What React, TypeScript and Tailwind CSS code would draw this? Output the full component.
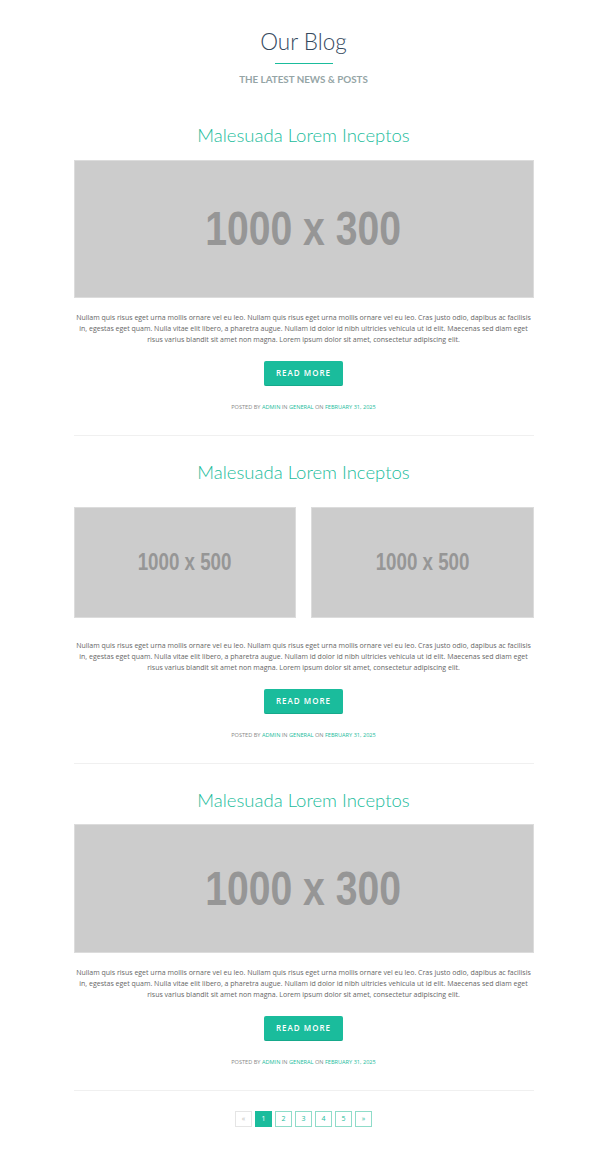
import React from "react";

const lines = [
  "Nullam quis risus eget urna mollis ornare vel eu leo. Nullam quis risus eget urna mollis ornare vel eu leo. Cras justo odio, dapibus ac facilisis",
  "in, egestas eget quam. Nulla vitae elit libero, a pharetra augue. Nullam id dolor id nibh ultricies vehicula ut id elit. Maecenas sed diam eget",
  "risus varius blandit sit amet non magna. Lorem ipsum dolor sit amet, consectetur adipiscing elit.",
];

function Placeholder({ label, className, textClass }: { label: string; className: string; textClass: string }) {
  return (
    <div className={`flex items-center justify-center bg-[#cccccc] border border-[#dcdcdc] ${className}`}>
      <span
        className={`inline-block scale-x-[0.815] font-['Liberation_Sans',Arial,sans-serif] font-bold text-[#969696] whitespace-nowrap ${textClass}`}
      >
        {label}
      </span>
    </div>
  );
}

function Post({ media, mediaTop, paraTop }: { media: React.ReactNode; mediaTop: string; paraTop: string }) {
  return (
    <article className="flex flex-col items-center">
      <h2 className="font-['Lato',sans-serif] font-light text-[18.5px] leading-[24px] text-[#1abc9c]">
        Malesuada Lorem Inceptos
      </h2>
      <div className={`w-full ${mediaTop}`}>{media}</div>
      <p className={`font-['Open_Sans',sans-serif] text-[7px] leading-[11px] text-[#666] text-center whitespace-nowrap ${paraTop}`}>
        {lines.map((l) => (
          <span key={l} className="block">
            {l}
          </span>
        ))}
      </p>
      <a className="mt-[16px] flex h-[25px] w-[79px] items-center justify-center rounded-[2px] bg-[#1abc9c] border-b border-[#16a98b] font-['Open_Sans',sans-serif] text-[8px] font-semibold tracking-[1px] text-white">
        READ MORE
      </a>
      <div className="mt-[17px] font-['Open_Sans',sans-serif] text-[5.6px] leading-[8px] text-[#888] uppercase">
        Posted by <span className="text-[#1abc9c]">Admin</span> in <span className="text-[#1abc9c]">General</span> on{" "}
        <span className="text-[#1abc9c]">February 31, 2025</span>
      </div>
      <div className="mt-[24px] h-px w-full bg-[#f0f0f0]" />
    </article>
  );
}

export default function App() {
  const pages = ["«", "1", "2", "3", "4", "5", "»"];
  return (
    <div className="min-h-[1168px] bg-white">
      <div className="mx-auto w-[460px] pt-[28px] pb-[40px]">
        <header className="flex flex-col items-center">
          <h1 className="font-['Lato',sans-serif] font-light text-[22.5px] leading-[28px] text-[#34495e]">Our Blog</h1>
          <div className="mt-[7px] h-px w-[58px] bg-[#1abc9c]" />
          <p className="mt-[8px] font-['Lato',sans-serif] font-bold text-[9.8px] leading-[14px] text-[#95a5a6]">
            THE LATEST NEWS &amp; POSTS
          </p>
        </header>

        <div className="mt-[37px] flex flex-col gap-[24px]">
          <Post
            mediaTop="mt-[13px]"
            paraTop="mt-[14px]"
            media={<Placeholder label="1000 x 300" className="h-[138px]" textClass="text-[48px]" />}
          />
          <Post
            mediaTop="mt-[23px]"
            paraTop="mt-[22px]"
            media={
              <div className="grid grid-cols-2 gap-[15px]">
                <Placeholder label="1000 x 500" className="h-[111px]" textClass="text-[23px]" />
                <Placeholder label="1000 x 500" className="h-[111px]" textClass="text-[23px]" />
              </div>
            }
          />
          <Post
            mediaTop="mt-[12px]"
            paraTop="mt-[14px]"
            media={<Placeholder label="1000 x 300" className="h-[129px]" textClass="text-[48px]" />}
          />
        </div>

        <nav className="mt-[20px] flex justify-center gap-[3px]">
          {pages.map((p, i) => (
            <span
              key={i}
              className={`flex h-[16px] w-[17px] items-center justify-center border font-['Open_Sans',sans-serif] text-[7px] ${
                i === 0
                  ? "border-[#e5e5e5] text-[#bbb]"
                  : i === 1
                  ? "border-[#1abc9c] bg-[#1abc9c] text-white"
                  : "border-[#8fdcc9] text-[#1abc9c]"
              }`}
            >
              {p}
            </span>
          ))}
        </nav>
      </div>
    </div>
  );
}
